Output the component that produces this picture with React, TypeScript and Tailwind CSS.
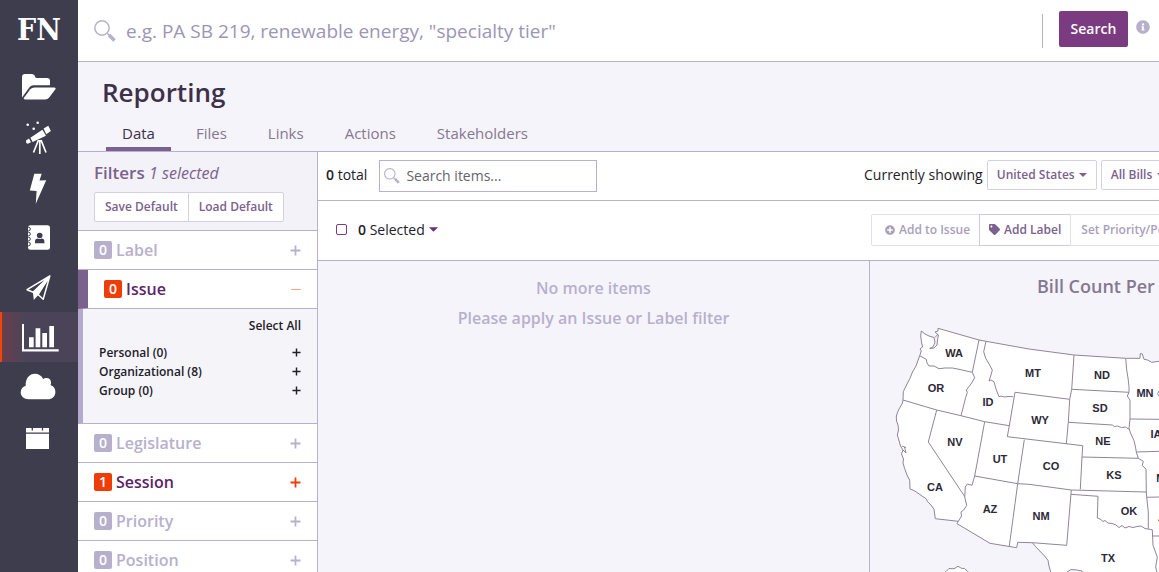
import type { ReactNode } from "react";
import { FaInfoCircle, FaPlusCircle, FaTag } from "react-icons/fa";

const navItems: { label: string; active?: boolean; art: ReactNode }[] = [
  {
    label: "Files",
    art: (
      <>
        <path d="M22 34V15q0-3 3-3h6.500q3 0 3.500 2.500 .3 1.500 2 1.500h10q3 0 3 3v4.300H33.500q-2.500 0-4 2L22 35.500z" />
        <path d="M34.500 25.500H54q2.500 0 1.200 2l-6 8q-1.500 2-4 2H25.500q-2.800 0-1.200-2.200l6-8q1.500-1.800 4.200-1.800z" />
      </>
    ),
  },
  {
    label: "Discovery",
    art: (
      <>
        <path d="M26 28.500l3-2 2 3.700-3.200 1.600q-2.300-.7-1.800-3.300zM30.400 25.700l12-8 3.600 6-13.400 6.300zM43.600 16.500l4.700-2.700 2.600 5.200-4.700 3.200z" />
        <path d="M38.500 28L33.500 40.500M39.800 28v14M41 28l5 12.500" fill="none" stroke="#fff" strokeWidth="1.700" />
        <circle cx="27.700" cy="12.700" r="1.300" />
        <circle cx="37.700" cy="10.700" r="1.300" />
        <circle cx="33.700" cy="16.700" r="1.300" />
      </>
    ),
  },
  {
    label: "Actions",
    art: <path d="M34.300 11.700h7.400l-2.200 6.800 6.700-.3-10.400 23.600 .8-12.800-6.800-.4z" />,
  },
  {
    label: "Contacts",
    art: (
      <>
        <rect x="28" y="13.300" width="22" height="24.400" rx="2.500" />
        <g fill="none" stroke="#3d3d4d" strokeWidth="1">
          <circle cx="28.500" cy="17" r="1.800" />
          <circle cx="28.500" cy="22" r="1.800" />
          <circle cx="28.500" cy="27" r="1.800" />
          <circle cx="28.500" cy="32" r="1.800" />
        </g>
        <g fill="#3d3d4d">
          <circle cx="39.700" cy="23.500" r="2.800" />
          <path d="M35 31.200v-1.600q0-3.200 3-3.200 1.700 1.100 3.400 0 3 0 3 3.200v1.600z" />
        </g>
      </>
    ),
  },
  {
    label: "Outreach",
    art: (
      <>
        <path d="M49.800 14L27 27.700l6.200 2.500zM49.800 14L38 32.500l5.200 4.800z" fill="none" stroke="#fff" strokeWidth="1.500" strokeLinejoin="round" />
        <path d="M50 13.600L32.800 29.800l1 8.300 4.700-5.300z" />
      </>
    ),
  },
  {
    label: "Reporting",
    active: true,
    art: (
      <>
        <path d="M22 12h2v25.200h34.700v2.200H22z" />
        <path d="M29 25.300h4.700v10H29zM35.600 16.300h4.700v19h-4.700zM42.300 21H47v14.300h-4.700zM49.300 14H54v21.300h-4.700z" />
      </>
    ),
  },
  {
    label: "Cloud",
    art: (
      <path d="M28.500 37.300c-4.500 0-7.800-3-7.800-7 0-3.300 2-5.700 5-6.500C25.200 16.500 29.500 11.700 34.800 11.700c3.800 0 6.900 2 8.400 5.300 1-.8 2-1.100 3.300-1.100 2.800 0 4.600 2 4.600 4.500 0 1-.2 1.900-.7 2.700 3 .9 5 3.500 5 6.800 0 4.200-3.200 7.400-7.700 7.400z" />
    ),
  },
  {
    label: "Calendar",
    art: (
      <>
        <path d="M26 16h23v4.600H26zM26 21.700h23V37H26z" />
        <path d="M32.300 14.500v4M42.500 14.500v4" stroke="#3d3d4d" strokeWidth="1.300" />
      </>
    ),
  },
];

function Magnifier({ className }: { className: string }) {
  return (
    <svg viewBox="0 0 22 22" className={className} fill="none" aria-hidden="true">
      <circle cx="8" cy="8" r="7.200" stroke="#b7b0cd" strokeWidth="1.500" />
      <path d="M13.200 13.200l2.300 2.300" stroke="#b7b0cd" strokeWidth="1.500" />
      <path d="M15 15l5.500 5.500" stroke="#b7b0cd" strokeWidth="3.600" />
    </svg>
  );
}

function Plus({ className }: { className: string }) {
  return (
    <svg viewBox="0 0 10 10" className={className} aria-hidden="true">
      <path d="M5 .5v9M.5 5h9" stroke="currentColor" strokeWidth="1.600" />
    </svg>
  );
}

function Caret({ className }: { className: string }) {
  return (
    <svg viewBox="0 0 8 4" className={className} aria-hidden="true">
      <path d="M0 0h8L4 4z" fill="currentColor" />
    </svg>
  );
}

function FilterRow({ count, name, on }: { count: number; name: string; on?: boolean }) {
  return (
    <button className="flex h-[39px] w-full items-center border-b border-[#b8b0d0] bg-white px-4">
      <span className={on ? "mr-1 flex h-[18px] w-[18px] items-center justify-center rounded-xs bg-[#ee3d08] text-sm font-semibold text-white" : "mr-1 flex h-[18px] w-[18px] items-center justify-center rounded-xs bg-[#b7b0cd] text-sm font-semibold text-white"}>
        {count}
      </span>
      <span className={on ? "text-base font-semibold text-[#5b2469]" : "text-base font-semibold text-[#b7b0cd]"}>{name}</span>
      <Plus className={on ? "ml-auto h-[11px] w-[11px] text-[#ee3d08]" : "ml-auto h-[11px] w-[11px] text-[#b7b0cd]"} />
    </button>
  );
}

const stateLabels: [string, number, number][] = [
  ["WA", 954, 353], ["OR", 936, 388], ["ID", 988, 402], ["MT", 1033, 373],
  ["WY", 1040, 420], ["ND", 1102, 375], ["SD", 1100, 408], ["MN", 1145, 393],
  ["NE", 1103, 441], ["IA", 1156, 434], ["NV", 955, 442], ["UT", 1000, 459],
  ["CO", 1051, 466], ["KS", 1114, 475], ["MO", 1165, 478], ["CA", 935, 487],
  ["AZ", 990, 509], ["NM", 1041, 516], ["OK", 1129, 511], ["AR", 1166, 517],
  ["TX", 1108, 558],
];

const mainland =
  "M938 328.300L979 340L986 341.300L1029 349L1074 355L1125.700 358.300L1140 358.300L1140.300 353.500L1142.300 354L1144 359.300L1147.500 360L1151.700 362.300L1159 361.300L1170 361" +
  "L1170 580L1083 580L1082 571L1077 570L1071 569.500L1067 572L1066 580L1053 580L1050.700 572L1049 566L1048 560.300L1044.500 556L1040.700 552L1036.500 547.500L1032.300 542.700" +
  "L1017.700 542.300L1016.700 547.700L990 543.300L957 523.700L958.300 521.300L935.300 518.700L934.500 513L934 509.300L931 505L927.300 501.500L926.500 499L922 496L917.300 492.700L914 490.500L910 489L909.700 480.300" +
  "L907 475L904.700 468.700L903 463L903.500 459L901.500 454L903 450L900.500 446L898.500 439L897.300 435L898.500 430L898 425L896.500 421L896.300 416L898.500 410L902.500 403L903 400L903.300 391.700" +
  "L907 384L910 378.300L912.500 372L916 366L919.700 355.700L921.300 351L920 349L922.500 347L921.500 342L920.700 336L921.300 331L925 334L929 336L934 337.500L935 342L933.300 346.500L929.700 348.500L934 348L937 345L937.500 340L938.500 335L935 332L938 331z";

const stateBorders = [
  "M919.700 355.700L923 357.500L926.300 359.300L927 363L929 366L934 366L939 368.700L945 368L952.300 368L960 369.500L972.300 372.300",
  "M979 340L972.300 372.300L974.700 377.700L971 384L966.300 390L967.300 392.500L965.700 397.300L961 415.700",
  "M903 400L936.700 410L961 415.700L984.700 421.700L1009.300 425.700",
  "M986 341.300L983.700 351.700L985.700 358.300L988.500 363L992.300 370L991 375L989 381L991 380L994 381.700L996 389L999 396.700L1001 396L1004 397L1008 396.500L1013.300 396.700",
  "M1015 392.300L1009.300 425.700L1007.300 436.700L1082.700 445.700",
  "M1015 392.300L1069.700 399.300",
  "M1074 355L1071.700 389.300L1069.700 399.300L1068.300 422.300L1066.300 444",
  "M1071.700 389.300L1129 392.300",
  "M1125.700 358.300L1126.700 370L1128 378L1129 386.700L1129 392.300L1127.300 396L1130 400L1130 419L1129 428.300L1130.500 433L1134 440.700L1135.500 447L1136.300 452L1138.300 458.300L1143.300 461.300L1142.300 465.300L1146 469.300L1146.300 492L1146.700 497.300L1148.300 512L1148.300 528.700",
  "M1068.300 422.300L1112.300 425L1114.300 426.500L1117.300 426L1121.500 427.500L1125.500 427L1129 429.300",
  "M1130 419L1159 419.300M1136.300 452L1159 451.300M1146.700 497.300L1159 497M1152.300 536L1159 536",
  "M1082.700 445.700L1082 457L1080.300 489.300M1082 457L1138.300 458.300",
  "M974.700 476L1017.700 483.700L1029 484.300L1071.300 490L1146.300 492",
  "M1024.300 439.700L1017.700 483.700L1009.300 546",
  "M984.700 421.700L974.700 476L972 485.300L967.300 484L965.300 487L964.700 497L966.700 505.300L963.700 510L961 512L961.500 516L958.300 521.300",
  "M936.700 410L928.300 442L964.700 496.500",
  "M1071.300 490L1066.700 545.300L1032.300 542.700",
  "M1071 494.300L1098 496.300L1097.300 518L1100 519L1103 521.500L1105 520.500L1108 523L1112 523.500L1116 525L1119 527.500L1122 525.500L1125 528L1129 526.500L1133 527.500L1137 526.500L1141 526L1145 528.500L1152.300 529.700",
  "M1152.300 529.700L1153 545.300L1157.300 557L1155.700 567L1157 572",
  "M1159 391q-3 3 0 5",
  "M935 337.500L938 334M902 446L906 447.500M903 450L906 453L904.500 447",
];

function BillMap() {
  return (
    <svg viewBox="870 318 289 254" className="h-[254px] w-[289px] shrink-0" role="img" aria-label="Bill count by state">
      <g stroke="#8f8599" strokeWidth="1" strokeLinejoin="round">
        <path fill="#fff" d={mainland} />
        <path fill="#fff" d="M943 574l3-2.500 3-3 5 .3 4-2.500 3.500 2 3 .2 3 2.800 3 2.700z" />
        {stateBorders.map((d) => (
          <path key={d} d={d} fill="none" />
        ))}
      </g>
      <g className="font-['Liberation_Sans',sans-serif] text-[11px] font-bold" fill="#2c2838" textAnchor="middle">
        {stateLabels.map(([name, x, y]) => (
          <text key={name} x={x} y={y + 4}>{name}</text>
        ))}
      </g>
    </svg>
  );
}

export default function App() {
  return (
    <div className="flex h-screen overflow-hidden bg-white font-['Open_Sans',sans-serif] text-[#22202a]">
      <nav className="w-[78px] shrink-0 bg-[#3d3d4d]" aria-label="Main">
        <a href="#home" className="flex h-[62px] items-center justify-center pb-1 font-['DejaVu_Serif_Condensed','DejaVu_Serif',serif] text-[30px] font-bold text-white">
          FN
        </a>
        {navItems.map((item) => (
          <a
            key={item.label}
            href="#section"
            aria-label={item.label}
            className={item.active ? "block h-[50px] border-l-2 border-[#f4450b] bg-[#4b4459] bg-linear-to-r from-[#673e4c] to-[#4b4459] to-30%" : "block h-[50px] border-l-2 border-transparent"}
          >
            <svg viewBox="2 0 76 50" className="h-[50px] w-[76px]" fill="#fff" aria-hidden="true">{item.art}</svg>
          </a>
        ))}
      </nav>

      <div className="flex min-w-0 flex-1 flex-col">
        <form className="flex h-[62px] shrink-0 items-center border-b border-[#b8b0d0] pl-4 pr-[9px]" onSubmit={(e) => e.preventDefault()}>
          <Magnifier className="h-[22px] w-[22px] shrink-0" />
          <input
            type="search"
            aria-label="Search legislation"
            placeholder={'e.g. PA SB 219, renewable energy, "specialty tier"'}
            className="ml-[10px] min-w-0 flex-1 bg-transparent pt-0.5 text-[19px] outline-none placeholder:text-[#9c95b5]"
          />
          <span className="h-[34px] border-l border-[#b8b0d0]" />
          <button className="mb-1 ml-4 h-9 w-[69px] rounded-xs bg-[#7b3b80] text-sm font-semibold text-white">Search</button>
          <FaInfoCircle className="mb-2 ml-2 h-[14px] w-[14px] shrink-0 text-[#b7b0cd]" />
        </form>

        <header className="flex h-[90px] shrink-0 flex-col justify-between border-b border-[#b8b0d0] bg-[#f5f4fa]">
          <h1 className="pl-6 pt-3 text-[26px] font-semibold leading-9 text-[#3d3049]">Reporting</h1>
          <div className="flex gap-[9px] pl-7 text-[15px] font-medium leading-5 text-[#857891]">
            <a href="#data" className="border-b-4 border-[#7b618d] px-4 pb-1 text-[#3d3049]">Data</a>
            <a href="#files" className="px-4">Files</a>
            <a href="#links" className="px-4">Links</a>
            <a href="#actions" className="px-4">Actions</a>
            <a href="#stakeholders" className="px-4">Stakeholders</a>
          </div>
        </header>

        <div className="flex min-h-0 flex-1">
          <aside className="w-60 shrink-0 overflow-hidden border-r border-[#b8b0d0] bg-white">
            <div className="h-[79px] border-b border-[#b8b0d0] bg-[#f2f2f8] px-4 pt-[7px]">
              <h2 className="text-[17px] font-semibold leading-7 text-[#7b618d]">
                Filters <em className="text-base font-normal leading-7">1 selected</em>
              </h2>
              <div className="mt-[5px] flex text-xs font-semibold text-[#7b618d]">
                <button className="h-[30px] rounded-l-xs border border-[#d5cfe6] bg-white px-[10px]">Save Default</button>
                <button className="-ml-px h-[30px] rounded-r-xs border border-[#d5cfe6] bg-white px-[10px]">Load Default</button>
              </div>
            </div>
            <FilterRow count={0} name="Label" />
            <button className="flex h-[39px] w-full items-center border-b border-l-10 border-b-[#b8b0d0] border-l-[#7b618d] bg-white px-4">
              <span className="mr-1 flex h-[18px] w-[18px] items-center justify-center rounded-xs bg-[#ee3d08] text-sm font-semibold text-white">0</span>
              <span className="text-base font-semibold text-[#5b2469]">Issue</span>
              <span className="ml-auto h-px w-[10px] bg-[#f8a583]" />
            </button>
            <div className="h-[115px] border-b border-l-5 border-b-[#b8b0d0] border-l-[#b3aacd] bg-[#f5f4f9] px-4 pt-2 text-xs font-semibold leading-[19px]">
              <div className="mb-2 text-right leading-[18px]"><button>Select All</button></div>
              {["Personal (0)", "Organizational (8)", "Group (0)"].map((group) => (
                <button key={group} className="flex w-full items-center justify-between">
                  {group}
                  <Plus className="h-[9px] w-[9px]" />
                </button>
              ))}
            </div>
            <FilterRow count={0} name="Legislature" />
            <FilterRow count={1} name="Session" on />
            <FilterRow count={0} name="Priority" />
            <FilterRow count={0} name="Position" />
          </aside>

          <main className="flex min-w-0 flex-1 flex-col">
            <div className="flex h-[49px] shrink-0 items-center border-b border-[#b8b0d0] pl-2">
              <p className="pb-0.5 text-sm"><b className="font-semibold">0</b> total</p>
              <label className="ml-3 flex h-8 w-[218px] items-center border border-[#b8b0d0] pl-1">
                <Magnifier className="h-4 w-4 shrink-0" />
                <input type="search" aria-label="Search items" placeholder="Search items..." className="ml-1.5 w-full min-w-0 text-sm outline-none placeholder:text-[#66636b]" />
              </label>
              <div className="ml-auto flex w-[295px] shrink-0 items-center gap-1 overflow-hidden whitespace-nowrap pb-0.5">
                <span className="text-sm">Currently showing</span>
                <label className="flex h-[30px] shrink-0 items-center gap-1 rounded-xs border border-[#d5cfe6] px-[9px] text-xs font-semibold text-[#7b618d]">
                  <select aria-label="Jurisdiction" className="appearance-none outline-none"><option>United States</option></select>
                  <Caret className="h-1 w-2" />
                </label>
                <label className="flex h-[30px] shrink-0 items-center gap-1 rounded-xs border border-[#d5cfe6] px-[9px] text-xs font-semibold text-[#7b618d]">
                  <select aria-label="Bills" className="appearance-none outline-none"><option>All Bills</option></select>
                  <Caret className="h-1 w-2" />
                </label>
              </div>
            </div>

            <div className="flex h-[60px] shrink-0 items-center border-b border-[#b8b0d0] pb-0.5 pl-[18px]">
              <input type="checkbox" aria-label="Select all items" className="h-[11px] w-[11px] appearance-none rounded-xs border border-[#7b3b80]" />
              <button className="ml-[11px] flex items-center gap-1 text-sm">
                <span><b className="font-semibold">0</b> Selected</span>
                <Caret className="h-[5px] w-[9px] text-[#6b2f78]" />
              </button>
              <div className="ml-auto flex w-72 shrink-0 overflow-hidden whitespace-nowrap text-xs font-semibold text-[#7b618d]">
                <button className="flex h-8 shrink-0 items-center gap-1 rounded-l-xs border border-[#e2deee] pl-[13px] pr-[9px] text-[#a99fbb]">
                  <FaPlusCircle className="h-[10px] w-[10px]" />Add to Issue
                </button>
                <button className="-ml-px flex h-8 shrink-0 items-center gap-1 border border-[#cfc9e2] px-[9px]">
                  <FaTag className="h-[11px] w-[11px]" />Add Label
                </button>
                <button className="-ml-px h-8 shrink-0 border border-[#e2deee] px-[10px] text-[#a99fbb]">Set Priority/Position</button>
              </div>
            </div>

            <div className="flex min-h-0 flex-1 bg-[#f5f4fb]">
              <div className="flex-1 pt-3 text-center text-base font-semibold leading-[30px] text-[#b7b0cd]">
                <p>No more items</p>
                <p>Please apply an Issue or Label filter</p>
              </div>
              <section className="w-[290px] shrink-0 overflow-hidden border-l border-[#b8b0d0]">
                <h2 className="h-[57px] whitespace-nowrap pl-[167px] pt-[11px] text-lg font-semibold leading-7 text-[#857891]">Bill Count Per</h2>
                <BillMap />
              </section>
            </div>
          </main>
        </div>
      </div>
    </div>
  );
}
